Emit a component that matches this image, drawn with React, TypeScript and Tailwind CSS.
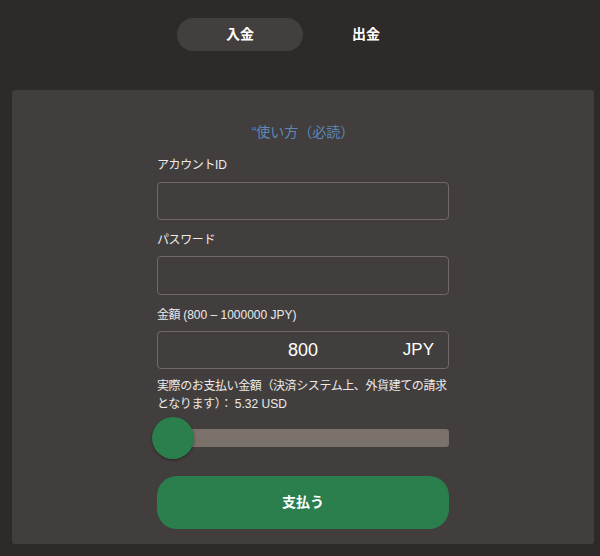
import React from "react";

const font = { fontFamily: '"Liberation Sans", "Noto Sans CJK JP", sans-serif' };

export default function App() {
  return (
    <div className="w-[600px] h-[556px] bg-[#2e2a29] text-white overflow-hidden" style={font}>
      <div className="flex justify-center pt-[18px] ml-3 mr-[6px]">
        <div className="w-[126px] h-[33px] rounded-full bg-[#433f3e] flex items-center justify-center text-[14px] font-bold">入金</div>
        <div className="w-[126px] h-[33px] rounded-full flex items-center justify-center text-[14px] font-bold">出金</div>
      </div>
      <div className="mt-[39px] ml-3 mr-[6px] h-[454px] bg-[#423e3d] rounded-[3px] pt-[32px]">
        <div className="text-center text-[14px] leading-[20px] text-[#5b89b8]">“使い方（必読）</div>
        <div className="w-[292px] ml-[145px]">
          <div className="mt-[14px] text-[12px] tracking-[-0.4px] leading-[18px] text-[#ecebea]">アカウント<span className="tracking-normal">ID</span></div>
          <div className="mt-[8px] h-[38px] rounded-[4px] border border-[#6f6a67]" />
          <div className="mt-[11px] text-[12px] tracking-[-0.4px] leading-[18px] text-[#ecebea]">パスワード</div>
          <div className="mt-[7px] h-[39px] rounded-[4px] border border-[#6f6a67]" />
          <div className="mt-[11px] text-[12px] tracking-[-0.4px] leading-[18px] text-[#ecebea]">金額 <span className="tracking-normal">(800 – 1000000 JPY)</span></div>
          <div className="mt-[7px] h-[38px] rounded-[4px] border border-[#6f6a67] flex items-center justify-center relative">
            <div className="text-[18px]">800</div>
            <div className="absolute right-[14px] top-0 h-full flex items-center text-[17px]">JPY</div>
          </div>
          <div className="mt-[8px] text-[12px] tracking-[-0.4px] leading-[18px] text-[#ecebea]">
            実際のお支払い金額（決済システム上、外貨建ての請求となります）： <span className="tracking-normal">5.32 USD</span>
          </div>
          <div className="relative mt-[16px] h-[18px] rounded-[3px] bg-[#7a716a]">
            <div className="absolute left-[-5px] top-[-12px] w-[42px] h-[42px] rounded-full bg-[#2a7f4d] shadow-[0_1px_3px_rgba(0,0,0,0.4)]" />
          </div>
          <button className="mt-[29px] w-full h-[53px] rounded-[20px] bg-[#2a7f4d] text-[14px] font-bold text-white">支払う</button>
        </div>
      </div>
    </div>
  );
}
